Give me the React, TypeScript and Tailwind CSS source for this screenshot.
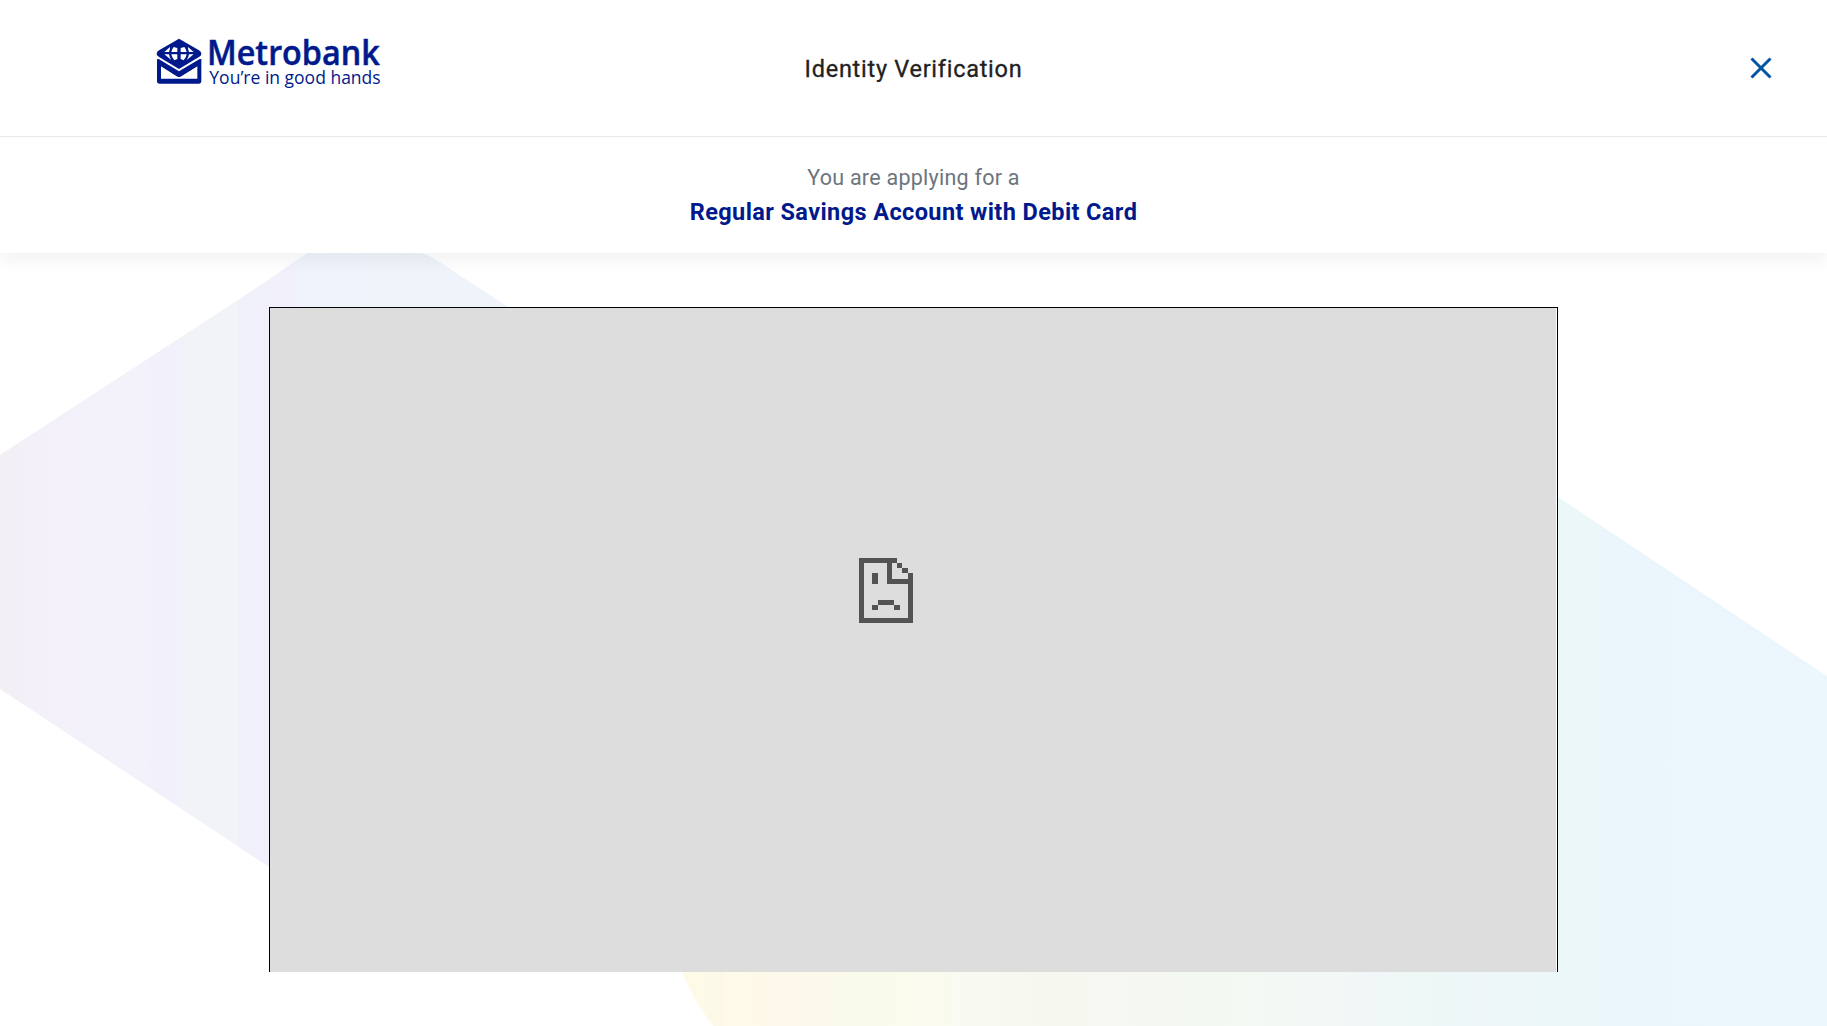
import React from "react";

const NAVY = "#001a8c";

function Logo() {
  return (
    <svg className="block h-[75px] w-[250px]" viewBox="0 0 750 225" role="img" aria-label="Metrobank">
      <path d="M102 41L162 76Q169 80 169 86Q169 92 163 95L102 132L41 95Q35 92 35 86Q35 80 42 76Z" fill={NAVY} />
      <g fill="#fff">
        <path d="M58 81L75 66Q76 72 72 81ZM79 81Q80 73 86 66L97 69V81ZM107 81V69L118 66Q124 73 125 81ZM132 81Q128 72 129 66L146 81Z" />
        <path d="M58 88H72Q73 97 79 105ZM79 88H97V102L88 106Q80 97 79 88ZM107 88H125Q124 97 116 106L107 102ZM132 88H146L125 105Q131 97 132 88Z" />
      </g>
      <path
        fillRule="evenodd"
        d="M36 103L102 143L169 103V168Q169 176 161 176H44Q36 176 36 168ZM48 124V161H157V124L108 154Q102 157 96 154Z"
        fill={NAVY}
      />
      <path d="M36 103Q40 100 46 105L102 139L159 105Q165 100 169 103L165 118L108 154Q102 157 96 154L40 118Z" fill={NAVY} />
      <text x="186" y="120" textLength="518" lengthAdjust="spacingAndGlyphs" className="font-['Open_Sans',sans-serif] text-[103px] font-semibold" fill={NAVY} stroke={NAVY} strokeWidth="1.5">
        Metrobank
      </text>
      <text x="193" y="176" textLength="514" lengthAdjust="spacingAndGlyphs" className="font-['Open_Sans',sans-serif] text-[56px]" fill={NAVY}>
        You’re in good hands
      </text>
    </svg>
  );
}

function SadPage() {
  return (
    <svg className="mt-[250px] mr-[54px] block h-[65px] w-[54px]" viewBox="57 54 162 195" fill="#535353" shapeRendering="crispEdges">
      <path d="M57 54H171V69H156V117H204V99H219V249H57ZM72 69V234H204V132H141V69Z" fillRule="evenodd" />
      <path d="M171 69H186V84H171ZM187 84H204V99H187ZM96 99H114V132H96ZM114 180H162V195H114ZM96 195H114V210H96ZM162 195H180V210H162Z" />
    </svg>
  );
}

function Backdrop() {
  return (
    <svg className="absolute inset-0 h-full w-full" viewBox="0 253 1827 773" preserveAspectRatio="none">
      <defs>
        <linearGradient id="violet" gradientUnits="userSpaceOnUse" x1="0" x2="520" y1="0" y2="0">
          <stop offset="0" stopColor="#f3eff5" />
          <stop offset=".05" stopColor="#f3eff7" />
          <stop offset=".051" stopColor="#f3f0fa" />
          <stop offset=".28" stopColor="#f3f1fa" />
          <stop offset=".286" stopColor="#f2f0fa" />
          <stop offset=".348" stopColor="#f2f0fa" />
          <stop offset=".35" stopColor="#f1f3f7" />
          <stop offset=".458" stopColor="#f1f3f8" />
          <stop offset=".46" stopColor="#f0f0fa" />
          <stop offset=".57" stopColor="#f2f1fb" />
          <stop offset=".574" stopColor="#eff3fb" />
          <stop offset="1" stopColor="#eef4fa" />
        </linearGradient>
        <linearGradient id="spectrum" gradientUnits="userSpaceOnUse" x1="682" x2="1827" y1="0" y2="0">
          <stop offset="0" stopColor="#fefae7" />
          <stop offset=".018" stopColor="#fefae8" />
          <stop offset=".023" stopColor="#fcf9e9" />
          <stop offset=".036" stopColor="#fcf9e9" />
          <stop offset=".038" stopColor="#fffaea" />
          <stop offset=".06" stopColor="#fefae9" />
          <stop offset=".09" stopColor="#fdf8ea" />
          <stop offset=".115" stopColor="#fcf9ec" />
          <stop offset=".147" stopColor="#fafaec" />
          <stop offset=".23" stopColor="#fafaee" />
          <stop offset=".24" stopColor="#f9fbf2" />
          <stop offset=".33" stopColor="#f6f7ef" />
          <stop offset=".37" stopColor="#f7f8f2" />
          <stop offset=".42" stopColor="#f4f8f1" />
          <stop offset=".49" stopColor="#f3f9f3" />
          <stop offset=".55" stopColor="#f2f8f5" />
          <stop offset=".61" stopColor="#f1f7f8" />
          <stop offset=".64" stopColor="#eef8f6" />
          <stop offset=".7" stopColor="#eef6f8" />
          <stop offset=".75" stopColor="#ecf7f9" />
          <stop offset=".798" stopColor="#ecf7f8" />
          <stop offset=".802" stopColor="#ebf6fc" />
          <stop offset="1" stopColor="#ebf6fd" />
        </linearGradient>
      </defs>
      <path d="M0 455L264 283Q293 262 308 253H422Q435 258 450 269L560 341V900H319L0 689Z" fill="url(#violet)" />
      <path d="M713 1026Q692 998 682 972V900L1500 459L1558 497L1827 676V1026Z" fill="url(#spectrum)" />
    </svg>
  );
}

export default function App() {
  return (
    <div className="flex h-screen w-full flex-col overflow-hidden bg-white font-[Roboto,sans-serif]">
      <div className="relative z-10 flex shrink-0 flex-col bg-white shadow-[0_8px_16px_rgba(0,0,0,0.05)]">
        <header className="grid h-[137px] grid-cols-3 border-b border-[#e9e9ea]">
          <div className="pt-[25px] pl-[145px]">
            <Logo />
          </div>
          <h1 className="mt-[54px] text-center text-[23.5px] leading-[30px] font-normal tracking-[0.73px] whitespace-nowrap text-[#212121] [-webkit-text-stroke:0.3px_#212121]">
            Identity Verification
          </h1>
          <div className="flex justify-end pt-[56px] pr-[54px]">
            <button aria-label="Close" className="h-6 w-6">
              <svg className="block" width="24" height="24" viewBox="0 0 24 24" fill="none" stroke="#0055a5" strokeWidth="3">
                <path d="M2.5 2.5L21.5 21.5M21.5 2.5L2.5 21.5" />
              </svg>
            </button>
          </div>
        </header>
        <div className="flex h-[116px] flex-col items-center pt-[24px] whitespace-nowrap">
          <p className="text-[21.5px] leading-[34px] tracking-[0.25px] text-[#6c757d]">You are applying for a</p>
          <p className="text-[23.5px] leading-[34px] font-bold tracking-[0.4px] text-[#001a8c]">
            Regular Savings Account with Debit Card
          </p>
        </div>
      </div>
      <main className="relative flex flex-1 justify-center pt-[54px] pb-[54px]">
        <Backdrop />
        <section className="relative w-[1289px] border-t border-r border-l border-black bg-white pr-px">
          <div className="flex h-full justify-center bg-[#dddddd]">
            <SadPage />
          </div>
        </section>
      </main>
    </div>
  );
}
